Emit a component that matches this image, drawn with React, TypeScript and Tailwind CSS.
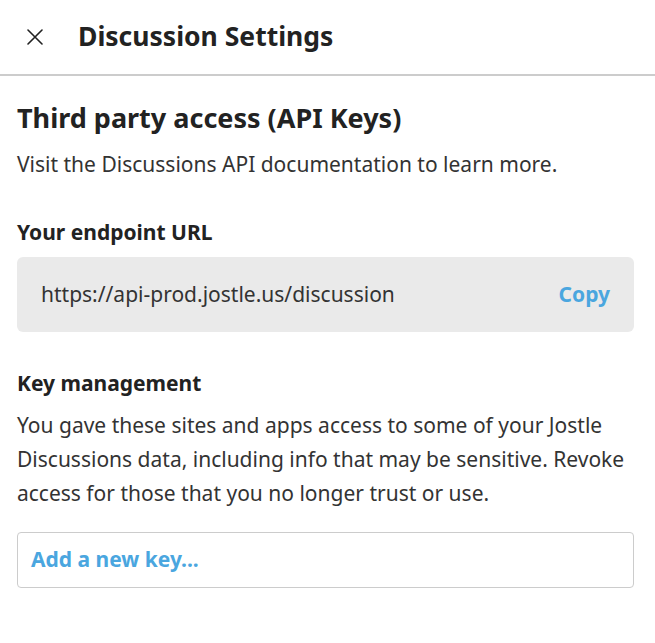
import React from 'react';

const font = { fontFamily: '"Noto Sans", "Open Sans", sans-serif' };

function CloseIcon() {
    return (
        <svg width="16" height="16" viewBox="0 0 16 16" className="text-[#222]">
            <path d="M1 1 L15 15 M15 1 L1 15" stroke="currentColor" strokeWidth="1.6" strokeLinecap="round" />
        </svg>
    );
}

export default function App() {
    return (
        <div className="w-[655px] h-[643px] bg-white text-[#262626]" style={font}>
            {/* header */}
            <div className="h-[76px] flex items-center border-b-2 border-[#cccccc]">
                <button className="ml-[27px] w-4 h-4 flex items-center justify-center">
                    <CloseIcon />
                </button>
                <h1 className="ml-[35px] -mt-[2px] text-[26.5px] font-bold leading-none text-[#222]">Discussion Settings</h1>
            </div>

            <div className="pl-[17px] pr-[21px]">
                <h2 className="mt-[24px] text-[27px] font-bold leading-[36px] text-[#222]">Third party access (API Keys)</h2>
                <p className="mt-[13px] text-[21px] leading-[30px] text-[#333]">
                    Visit the Discussions API documentation to learn more.
                </p>

                <h3 className="mt-[38px] text-[21px] font-bold leading-[30px] text-[#222]">Your endpoint URL</h3>
                <div className="mt-[10px] h-[75px] bg-[#eaeaea] rounded-[6px] flex items-center justify-between pl-[24px] pr-[24px]">
                    <span className="text-[21px] text-[#333]">https://api-prod.jostle.us/discussion</span>
                    <button className="text-[21px] font-bold text-[#4aa6df]">Copy</button>
                </div>

                <h3 className="mt-[36px] text-[21px] font-bold leading-[30px] text-[#222]">Key management</h3>
                <p className="mt-[10px] text-[21px] leading-[34px] text-[#333]">
                    You gave these sites and apps access to some of your Jostle Discussions data, including info that may be sensitive. Revoke access for those that you no longer trust or use.
                </p>

                <div className="mt-[22px] h-[56px] border-[1.5px] border-[#cccccc] rounded-[4px] flex items-center pl-[13px]">
                    <span className="text-[21px] font-bold text-[#4aa6df]">Add a new key...</span>
                </div>
            </div>
        </div>
    );
}
